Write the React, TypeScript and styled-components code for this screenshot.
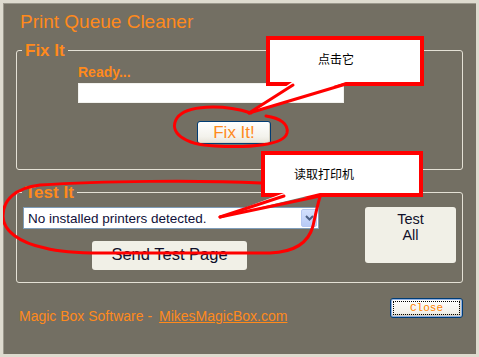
import styled, { createGlobalStyle } from 'styled-components'

const ORANGE = '#ff8a1c'
const BG = '#736f63'
const RED = '#ff0000'

const GlobalStyle = createGlobalStyle`
  html, body { margin: 0; padding: 0; }
  body {
    font-family: "Liberation Sans", Arial, sans-serif;
    background: ${BG};
  }
`

const Window = styled.div`
  position: relative;
  box-sizing: border-box;
  width: 479px;
  height: 357px;
  border: 3px solid #dedbcf;
  box-shadow: inset 1px 1px 0 #9b988c;
  background: ${BG};
  padding: 8px 13px 0;
  overflow: hidden;
`

const Title = styled.div`
  margin-left: 4px;
  font-size: 19px;
  line-height: 22px;
  color: ${ORANGE};
`

const Group = styled.div<{ $height: number; $top: number }>`
  box-sizing: border-box;
  height: ${p => p.$height}px;
  margin-top: ${p => p.$top}px;
  border: 1px solid #e4e1d5;
  border-radius: 3px;
`

const Legend = styled.div`
  width: fit-content;
  margin: -10px 0 0 5px;
  padding: 0 3px;
  background: ${BG};
  color: ${ORANGE};
  font-weight: bold;
  font-size: 17px;
  line-height: 20px;
`

const FixBody = styled.div`
  display: flex;
  flex-direction: column;
  align-items: flex-start;
  padding: 3px 0 0 61px;
`

const Status = styled.div`
  color: ${ORANGE};
  font-weight: bold;
  font-size: 14px;
  line-height: 16px;
`

const TextBox = styled.div`
  box-sizing: border-box;
  width: 266px;
  height: 20px;
  margin-top: 3px;
  background: #fff;
  border: 1px solid #f2f2ee;
`

const XpButton = styled.button`
  box-sizing: border-box;
  border: 1px solid #003c74;
  border-radius: 3px;
  background: linear-gradient(#ffffff, #f3f2ec 70%, #e6e3d8);
  box-shadow: inset -1px -1px 0 #d8d4c6;
  color: ${ORANGE};
  padding: 0;
  font-family: "Liberation Sans", Arial, sans-serif;
`

const FixButton = styled(XpButton)`
  width: 74px;
  height: 23px;
  margin: 18px 0 0 119px;
  font-size: 17px;
`

const TestBody = styled.div`
  display: flex;
  justify-content: space-between;
  align-items: flex-start;
  padding: 4px 6px 0;
`

const TestColumn = styled.div`
  display: flex;
  flex-direction: column;
  align-items: flex-start;
`

const Combo = styled.div`
  box-sizing: border-box;
  display: flex;
  align-items: center;
  justify-content: space-between;
  width: 296px;
  height: 22px;
  padding: 1px 1px 1px 4px;
  background: #fff;
  border: 1px solid #7f9db9;
  font-size: 13.5px;
  color: #10103a;
`

const DropArrow = styled.div`
  box-sizing: border-box;
  display: flex;
  align-items: center;
  justify-content: center;
  width: 16px;
  height: 18px;
  border-radius: 2px;
  background: linear-gradient(#d3e0fd, #b8cbf6);
  border: 1px solid #b6c8f2;
`

const FlatButton = styled.button<{ $w: number; $h: number }>`
  box-sizing: border-box;
  width: ${p => p.$w}px;
  height: ${p => p.$h}px;
  border: none;
  border-radius: 3px;
  background: #f1f0e7;
  color: #10102a;
  padding: 0;
  font-family: "Liberation Sans", Arial, sans-serif;
`

const SendButton = styled(FlatButton)`
  margin: 12px 0 0 69px;
  padding-bottom: 2px;
  font-size: 16.5px;
`

const TestAllButton = styled(FlatButton)`
  align-self: flex-start;
  display: flex;
  flex-direction: column;
  align-items: center;
  padding-top: 4px;
  font-size: 14.5px;
  line-height: 16px;
`

const Footer = styled.div`
  display: flex;
  justify-content: space-between;
  align-items: flex-start;
  margin-top: 15px;
  padding-left: 3px;
`

const FooterText = styled.div`
  margin-top: 10px;
  font-size: 14px;
  line-height: 16px;
  color: ${ORANGE};
  white-space: pre;
`

const Link = styled.a`
  color: ${ORANGE};
  text-decoration: underline;
  margin-left: 7px;
`

const CloseButton = styled(XpButton)`
  width: 73px;
  height: 20px;
  font-family: "Liberation Mono", "Courier New", monospace;
  font-size: 11px;
  color: #ff8400;
  outline: 1px dotted #000;
  outline-offset: -4px;
  box-shadow: inset 0 0 0 1px #8fb1e6, inset -1px -1px 0 2px #d8d4c6;
`

const Overlay = styled.div`
  position: absolute;
  inset: -3px;
  pointer-events: none;
`

const Callout = styled.div<{ $x: number; $y: number; $w: number; $h: number; $pl: number }>`
  position: absolute;
  box-sizing: border-box;
  left: ${p => p.$x}px;
  top: ${p => p.$y}px;
  width: ${p => p.$w}px;
  height: ${p => p.$h}px;
  padding: 12px 0 0 ${p => p.$pl}px;
  border: 4px solid ${RED};
  background: #fff;
  color: #000;
  font-family: "Noto Sans CJK SC", sans-serif;
  font-size: 12px;
  line-height: 14px;
`

const Marks = styled.svg`
  position: absolute;
  left: 0;
  top: 0;
`

export default function App() {
  return (
    <>
      <GlobalStyle />
      <Window>
        <Title>Print Queue Cleaner</Title>
        <Group $height={120} $top={17}>
          <Legend>Fix It</Legend>
          <FixBody>
            <Status>Ready...</Status>
            <TextBox />
            <FixButton>Fix It!</FixButton>
          </FixBody>
        </Group>
        <Group $height={91} $top={22}>
          <Legend>Test It</Legend>
          <TestBody>
            <TestColumn>
              <Combo>
                <span>No installed printers detected.</span>
                <DropArrow>
                  <svg width="9" height="6" viewBox="0 0 9 6">
                    <path d="M1 1 L4.5 4.5 L8 1" fill="none" stroke="#4d6185" strokeWidth="2" />
                  </svg>
                </DropArrow>
              </Combo>
              <SendButton $w={155} $h={29}>Send Test Page</SendButton>
            </TestColumn>
            <TestAllButton $w={91} $h={56}>
              <span>Test</span>
              <span>All</span>
            </TestAllButton>
          </TestBody>
        </Group>
        <Footer>
          <FooterText>
            Magic Box Software -<Link href="#">MikesMagicBox.com</Link>
          </FooterText>
          <CloseButton>Close</CloseButton>
        </Footer>

        <Overlay>
          <Callout $x={266} $y={36} $w={158} $h={50} $pl={48}>点击它</Callout>
          <Callout $x={261} $y={151} $w={162} $h={46} $pl={29}>读取打印机</Callout>
          <Marks width="479" height="357">
            <g fill="none" stroke={RED} strokeWidth="3" strokeLinecap="round" strokeLinejoin="round">
              <path d="M251 113 C222 104 186 105 177 118 C168 132 184 145 215 146 C250 148 284 145 287 133 C289 124 280 118 266 116" />
              <path d="M261 183 C200 180 100 181 40 185 C15 188 3 200 3 216 C3 231 20 243 45 248 C60 252 80 253 100 253 L270 253 C296 252 309 241 313 226 C316 212 318 203 320 197" />
            </g>
            <polygon points="292,82 346,82 249,113" fill="#fff" />
            <polygon points="284,193 320,193 220,217" fill="#fff" />
            <g stroke={RED} strokeWidth="3" strokeLinecap="round">
              <line x1="293" y1="85" x2="249" y2="113" />
              <line x1="346" y1="84" x2="249" y2="113" />
              <line x1="284" y1="196" x2="220" y2="217" />
              <line x1="320" y1="196" x2="220" y2="217" />
            </g>
          </Marks>
        </Overlay>
      </Window>
    </>
  )
}
